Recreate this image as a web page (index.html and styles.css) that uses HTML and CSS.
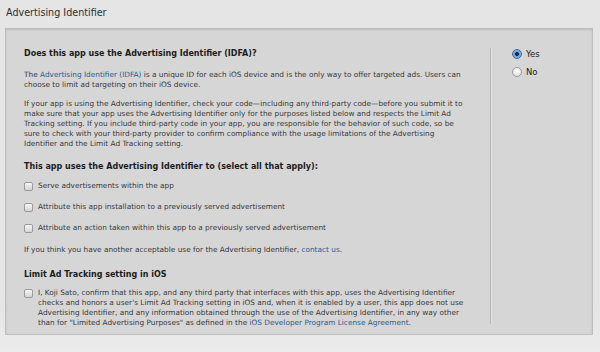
FILE: index.html
```html
<!DOCTYPE html>
<html>
<head>
<meta charset="utf-8">
<link rel="stylesheet" href="styles.css">
</head>
<body>
<h1 class="page-title">Advertising Identifier</h1>
<section class="panel">
  <div class="main">
    <h2 class="q">Does this app use the Advertising Identifier (IDFA)?</h2>
    <p class="txt">The <a href="#">Advertising Identifier (IDFA)</a> is a unique ID for each iOS device and is the only way to offer targeted ads. Users can<br>choose to limit ad targeting on their iOS device.</p>
    <p class="txt p2">If your app is using the Advertising Identifier, check your code—including any third-party code—before you submit it to<br>make sure that your app uses the Advertising Identifier only for the purposes listed below and respects the Limit Ad<br>Tracking setting. If you include third-party code in your app, you are responsible for the behavior of such code, so be<br>sure to check with your third-party provider to confirm compliance with the usage limitations of the Advertising<br>Identifier and the Limit Ad Tracking setting.</p>
    <h2 class="q q2">This app uses the Advertising Identifier to (select all that apply):</h2>
    <div class="checks">
      <label class="check"><span class="cb"></span><span>Serve advertisements within the app</span></label>
      <label class="check"><span class="cb"></span><span>Attribute this app installation to a previously served advertisement</span></label>
      <label class="check"><span class="cb"></span><span>Attribute an action taken within this app to a previously served advertisement</span></label>
    </div>
    <p class="txt p3">If you think you have another acceptable use for the Advertising Identifier, <a href="#">contact us</a>.</p>
    <h2 class="q q3">Limit Ad Tracking setting in iOS</h2>
    <label class="check multi"><span class="cb"></span><span>I, Koji Sato, confirm that this app, and any third party that interfaces with this app, uses the Advertising Identifier<br>checks and honors a user's Limit Ad Tracking setting in iOS and, when it is enabled by a user, this app does not use<br>Advertising Identifier, and any information obtained through the use of the Advertising Identifier, in any way other<br>than for "Limited Advertising Purposes" as defined in the <a href="#">iOS Developer Program License Agreement</a>.</span></label>
  </div>
  <div class="side">
    <label class="radio"><span class="rb on"></span><span>Yes</span></label>
    <label class="radio"><span class="rb"></span><span>No</span></label>
  </div>
</section>
</body>
</html>
```
FILE: styles.css
```css
html, body {
  margin: 0;
  padding: 0;
}
body {
  width: 600px;
  height: 352px;
  background: linear-gradient(#e5e5e5 0, #e5e5e5 300px, #ebebeb 352px);
  font-family: "DejaVu Sans", sans-serif;
  color: #383838;
  overflow: hidden;
}
.page-title {
  margin: 0;
  padding: 7px 6px 0 6px;
  height: 21px;
  font-size: 9.6px;
  font-weight: normal;
  color: #2e2e2e;
  line-height: 12px;
}
.panel {
  margin: 0 7px 0 5px;
  height: 307px;
  box-sizing: border-box;
  border: 1px solid #bdbdbd;
  background: #d6d6d6;
  box-shadow: inset 0 1px 2px rgba(0,0,0,0.12);
  display: flex;
  padding: 19px 0 9px 0;
}
.main {
  width: 484px;
  padding-left: 18px;
  box-sizing: border-box;
  flex: none;
}
.q {
  margin: 0;
  font-size: 8px;
  line-height: 12px;
  font-weight: bold;
  color: #1c1c1c;
  white-space: nowrap;
}
.txt {
  margin: 10px 0 0 0;
  font-size: 7.35px;
  line-height: 10px;
  white-space: nowrap;
}
.p2 { margin-top: 9px; }
.q2 { margin-top: 12px; }
.p3 { margin-top: 12px; }
.q3 { margin-top: 14px; }
a {
  color: #2a5b92;
  text-decoration: none;
}
.checks {
  margin-top: 8px;
  display: flex;
  flex-direction: column;
  gap: 11px;
}
.check {
  display: flex;
  align-items: center;
  gap: 5px;
  font-size: 7.35px;
  line-height: 10px;
  white-space: nowrap;
}
.check.multi {
  margin-top: 7px;
  align-items: flex-start;
}
.check.multi .cb { margin-top: 1px; }
.cb {
  width: 7px;
  height: 7px;
  flex: none;
  border: 1px solid #9a9a9a;
  border-radius: 2px;
  background: linear-gradient(#f7f7f7, #d4d4d4);
}
.side {
  flex: 1;
  border-left: 1px solid #b6b6b6;
  box-shadow: inset 1px 0 0 #e2e2e2;
  margin-bottom: 1px;
  padding-left: 21px;
  display: flex;
  flex-direction: column;
  gap: 6px;
}
.radio {
  display: flex;
  align-items: center;
  gap: 4px;
  font-size: 8.5px;
  line-height: 12px;
  color: #222;
}
.rb {
  width: 8px;
  height: 8px;
  flex: none;
  border-radius: 50%;
  border: 1px solid #9c9c9c;
  background: radial-gradient(circle at 50% 35%, #ffffff, #d6d6d6);
}
.rb.on {
  border-color: #3c6aa8;
  background: radial-gradient(circle, #1a2c45 0, #1a2c45 1.7px, #6e9ad6 2.2px, #a3c1e8 100%);
}
```
